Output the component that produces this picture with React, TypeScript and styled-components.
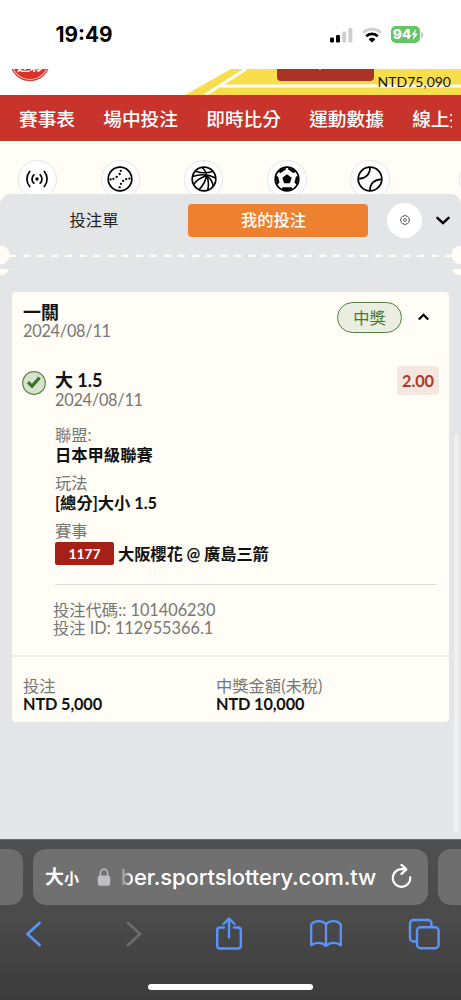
import React from 'react';
import styled, { createGlobalStyle } from 'styled-components';

const GlobalStyle = createGlobalStyle`
  * { box-sizing: border-box; }
  body { margin: 0; background: #fff; }
  svg { display: block; flex: none; }
`;

const Screen = styled.main`
  width: 461px;
  height: 1000px;
  overflow: hidden;
  display: flex;
  flex-direction: column;
  background: #fffdf5;
  font-family: Lato, 'Noto Sans CJK TC', sans-serif;
  color: #111;
`;

const StatusBar = styled.header`
  height: 69px;
  flex: none;
  display: flex;
  align-items: center;
  padding: 0 38px 0 55.5px;
  background: #fff;
`;
const Clock = styled.time`
  flex: 1;
  font: 700 20.8px/24px Inter, sans-serif;
  color: #000;
`;
const StatusIcons = styled.div`
  display: flex;
  align-items: center;
  gap: 9px;
`;
const Battery = styled.div`
  display: flex;
  align-items: center;
  gap: 1px;
`;
const BatteryLevel = styled.div`
  width: 29px;
  height: 17px;
  display: flex;
  align-items: center;
  justify-content: center;
  border-radius: 5px;
  background: #65c466;
  color: #fff;
  font: 800 13.8px/17px Inter, sans-serif;
`;
const BatteryTip = styled.i`
  width: 2px;
  height: 6px;
  border-radius: 0 2px 2px 0;
  background: #c4c4c4;
`;

const Masthead = styled.div`
  height: 26px;
  flex: none;
  display: flex;
  position: relative;
  overflow: hidden;
  background: #fff;
`;
const MastheadArt = styled.svg`
  position: absolute;
  inset: 0;
`;
const Logo = styled.div`
  position: absolute;
  left: 10px;
  top: -28px;
  width: 40px;
  height: 40px;
  padding-top: 17px;
  border-radius: 50%;
  background: #d8322a;
  box-shadow: inset 0 0 0 1px #d8322a, inset 0 0 0 2px #f4c9c5;
  color: #fff;
  text-align: center;
  font: 700 13px/1 'Noto Sans CJK TC', sans-serif;
`;
const Balance = styled.span`
  position: relative;
  margin: 4px 10px 0 auto;
  font-size: 14px;
  line-height: 18px;
  color: #111;
`;

const Nav = styled.nav`
  height: 46px;
  flex: none;
  display: flex;
  align-items: center;
  padding: 0 9px 0 19px;
  background: #c8342b;
  white-space: nowrap;
`;
const NavClip = styled.div`
  display: flex;
  gap: 28.4px;
  overflow: hidden;
`;
const NavItem = styled.a`
  flex: none;
  font: 500 18.65px/28px 'Noto Sans CJK TC', sans-serif;
  color: #fff;
`;

const Sports = styled.div`
  height: 53px;
  flex: none;
  display: flex;
  gap: 43.7px;
  padding: 18.5px 0 0 17.5px;
  overflow: hidden;
`;
const SportButton = styled.div<{ $offset?: number }>`
  width: 39.5px;
  height: 39.5px;
  flex: none;
  margin-left: ${(p) => p.$offset ?? 0}px;
  display: flex;
  align-items: center;
  justify-content: center;
  border-radius: 50%;
  border: 1px solid #e6e6e6;
  background: #fff;
`;

const Sheet = styled.section`
  height: 645px;
  flex: none;
  position: relative;
  overflow: hidden;
  display: flex;
  flex-direction: column;
  border-radius: 10px 10px 0 0;
  background: #e4e5e7;
`;
const Tabs = styled.div`
  height: 52px;
  flex: none;
  display: flex;
  align-items: center;
  padding-right: 10px;
`;
const Tab = styled.div<{ $active?: boolean }>`
  width: ${(p) => (p.$active ? 180 : 188)}px;
  height: 33px;
  padding-right: ${(p) => (p.$active ? 9 : 0)}px;
  border-radius: 4px;
  text-align: center;
  font-size: 16.3px;
  line-height: 32px;
  font-weight: ${(p) => (p.$active ? 500 : 400)};
  background: ${(p) => (p.$active ? '#ee8130' : 'transparent')};
  color: ${(p) => (p.$active ? '#fff' : '#222')};
`;
const SettingsButton = styled.div`
  width: 35px;
  height: 35px;
  margin: 0 14px 0 19px;
  display: flex;
  align-items: center;
  justify-content: center;
  border-radius: 50%;
  background: #fff;
`;
const Perforation = styled.svg`
  height: 36px;
`;

const Card = styled.article`
  width: 437px;
  height: 430px;
  margin: 10px 0 0 12px;
  display: flex;
  flex-direction: column;
  border-radius: 4px;
  background: #fffdf5;
`;
const CardHead = styled.div`
  height: 76px;
  display: flex;
  align-items: flex-start;
  padding: 10px 19px 0 11px;
`;
const Column = styled.div<{ $width?: number; $gap?: number }>`
  display: flex;
  flex-direction: column;
  gap: ${(p) => p.$gap ?? 0}px;
  ${(p) => (p.$width ? `width: ${p.$width}px;` : 'flex: 1;')}
`;
const Title = styled.h2`
  margin: 0;
  font-size: 18px;
  line-height: 20px;
  height: 20px;
  font-weight: 700;
  color: #111;
`;
const Muted = styled.div<{ $tight?: boolean }>`
  font-size: 16.3px;
  line-height: 18px;
  height: 18px;
  letter-spacing: ${(p) => (p.$tight ? '-0.25px' : '0')};
  color: #777;
  white-space: nowrap;
`;
const Strong = styled.div`
  font-size: 16.3px;
  line-height: 20px;
  height: 20px;
  font-weight: 700;
  color: #111;
  white-space: nowrap;
`;
const Amount = styled(Strong)`
  line-height: 18px;
  height: 18px;
  letter-spacing: -0.14px;
`;
const WonPill = styled.div`
  width: 65px;
  height: 31px;
  margin: 0 15px 0 0;
  border: 1.4px solid #538243;
  border-radius: 16px;
  background: #e9eee0;
  color: #477936;
  text-align: center;
  font-size: 16.3px;
  line-height: 29px;
`;
const Selection = styled.div`
  display: flex;
  height: 48px;
  padding: 2px 10px 0 10px;
`;
const CheckWrap = styled.div`
  width: 33px;
  padding-top: 1px;
`;
const Odds = styled.div`
  width: 42px;
  height: 29px;
  margin-top: -4px;
  border-radius: 4px;
  background: #f4e7df;
  color: #ae382d;
  text-align: center;
  font-size: 16.3px;
  letter-spacing: -0.1px;
  line-height: 29px;
  font-weight: 700;
`;
const Details = styled.div`
  height: 169px;
  margin: 0 12px 0 43px;
  padding-top: 10px;
  border-bottom: 1px solid #dfdeda;
`;
const Field = styled.div`
  height: 48px;
  display: flex;
  flex-direction: column;
  gap: 1px;
`;
const Match = styled.div`
  height: 25px;
  margin-top: 1px;
  display: flex;
  align-items: center;
  gap: 4px;
`;
const MatchCode = styled.span`
  width: 59px;
  height: 23px;
  border-radius: 2px;
  background: #a62018;
  color: #fff;
  text-align: center;
  font-size: 13.8px;
  line-height: 23px;
  font-weight: 700;
`;
const MatchName = styled(Strong)`
  letter-spacing: -0.1px;
`;
const Codes = styled.div`
  height: 72px;
  padding: 16px 0 0 41px;
  border-bottom: 2px solid #efede6;
`;
const Totals = styled.div`
  display: flex;
  padding: 20px 11px 0;
`;
const ScrollThumb = styled.div`
  position: absolute;
  right: 3px;
  top: 240px;
  width: 4px;
  height: 399px;
  border-radius: 2px;
  background: #f0f0f0;
`;

const Browser = styled.footer`
  height: 161px;
  flex: none;
  display: flex;
  flex-direction: column;
  align-items: center;
  border-top: 1px solid #6a6a6b;
  background: linear-gradient(#505050 0, #4a4a4a 50%, #3c3b3b 100%);
`;
const AddressRow = styled.div`
  width: 461px;
  margin-top: 9px;
  display: flex;
  gap: 10px;
`;
const NeighbourTab = styled.div<{ $side: 'left' | 'right' }>`
  width: 23px;
  height: 56px;
  border-radius: ${(p) => (p.$side === 'left' ? '0 13px 13px 0' : '13px 0 0 13px')};
  background: #6e6e6e;
`;
const AddressBar = styled.div`
  width: 395px;
  height: 56px;
  display: flex;
  align-items: center;
  padding: 0 16px 0 12px;
  border-radius: 13px;
  background: #707070;
  color: #fff;
`;
const TextSize = styled.span`
  width: 51.5px;
  font: 700 19px/28px 'Noto Sans CJK TC', sans-serif;
  small { font-size: 15px; }
`;
const Url = styled.span`
  margin-left: 10px;
  flex: 1;
  font: 500 22px/28px Inter, sans-serif;
  letter-spacing: -0.12px;
  white-space: nowrap;
  span {
    background: linear-gradient(90deg, #8a8a8a, #fff 85%);
    background-clip: text;
    color: transparent;
  }
`;
const Toolbar = styled.div`
  width: 461px;
  height: 58px;
  display: grid;
  grid-template-columns: 67px 133px 58px 136px 59px;
  align-items: center;
  justify-items: center;
`;
const HomeIndicator = styled.div`
  width: 165px;
  height: 6px;
  margin-top: 21px;
  border-radius: 4px;
  background: #fff;
`;

const blue = '#5b93f8';

const ballProps = {
  width: 26,
  height: 26,
  viewBox: '0 0 26 26',
  fill: 'none',
  stroke: '#000',
  strokeWidth: 1.7,
} as const;

const LiveIcon = () => (
  <svg {...ballProps} strokeLinecap="round">
    <circle cx="13" cy="13" r="1.7" fill="#000" stroke="none" />
    <path d="M9.8 8.8a5.8 5.8 0 0 0 0 8.4M16.2 8.8a5.8 5.8 0 0 1 0 8.4M5.7 5.5a11.5 11.5 0 0 0 0 15M20.3 5.5a11.5 11.5 0 0 1 0 15" />
  </svg>
);
const seam = [
  [13.8, 4.8], [12.7, 8], [9.6, 11], [6.4, 12.8], [3.6, 13.4],
  [22.4, 12.6], [19.2, 13.2], [16.2, 15], [14, 17.8], [12.7, 21.4],
];
const BaseballIcon = () => (
  <svg {...ballProps}>
    <circle cx="13" cy="13" r="11.8" />
    <g fill="#000" stroke="none">
      {seam.map(([x, y]) => (
        <circle key={`${x}-${y}`} cx={x} cy={y} r="1.15" />
      ))}
    </g>
  </svg>
);
const BasketballIcon = () => (
  <svg {...ballProps} strokeWidth={1.6}>
    <circle cx="13" cy="13" r="11.8" strokeWidth="1.7" />
    <path d="M4.5 5.2C10 7 17 7.200 21.800 5.200M1.500 10.5C9 8 18 8.500 24.700 12M2.500 18.500C6 13.500 10 11.500 15 9.700M11 1.500C14 4 15.500 7 15.500 9.700C15 14 12 19.500 8 23.500M15.500 9.700C17.500 14 18 19 16.800 24M15.500 9.700C19 12 21.500 15.500 22.200 20" />
  </svg>
);
const SoccerIcon = () => (
  <svg {...ballProps}>
    <circle cx="13" cy="13" r="11.8" />
    <path d="M13 8.2l4.7 3.5-1.8 5.5h-5.8l-1.8-5.5z" fill="#000" stroke="none" />
    <path d="M6 3.500L11.500 1.800l.6 1.500L6.800 6.900 4.600 6.200zM20 3.500L14.500 1.800l-.6 1.500 5.300 3.600 2.200-.7zM1.400 10l2.700.4 1.400 6-2.500 2.500zM24.600 10l-2.700.4-1.400 6 2.500 2.500zM8.500 21.200h9l1 2-3 1.600h-5l-3-1.600z" fill="#000" stroke="none" />
  </svg>
);
const TennisIcon = () => (
  <svg {...ballProps}>
    <circle cx="13" cy="13" r="11.8" />
    <path d="M13 1.3C13.2 8.5 8 13 1.3 12.7M24.7 13.3C18 13 12.8 17.5 13 24.7" />
  </svg>
);

const SignalIcon = () => (
  <svg width="24" height="16" viewBox="0 0 24 16">
    <rect x="1" y="10.5" width="4" height="5" rx="1.2" />
    <rect x="7" y="8" width="4" height="7.5" rx="1.2" />
    <rect x="13.2" y="4.5" width="4" height="11" rx="1.2" fill="#cfcfcf" />
    <rect x="19.4" y="1" width="4" height="14.5" rx="1.2" fill="#cfcfcf" />
  </svg>
);
const WifiIcon = () => (
  <svg width="20" height="16" viewBox="0 0 20 16" fill="none" strokeWidth="2.7">
    <path d="M1 5.9C6 .9 14 .9 19 5.9" stroke="#cfcfcf" />
    <path d="M4.2 9.2c3.2-3.2 8.4-3.2 11.6 0" stroke="#000" />
    <path d="M6.600 12.200q3.400-2.800 6.800 0L10 15.600z" fill="#000" />
  </svg>
);

const Dashes = () => (
  <Perforation width="461" height="36" viewBox="0 0 461 36">
    <g fill="#fffdf5">
      <circle cx="0" cy="9" r="9.6" />
      <circle cx="461" cy="9" r="9.6" />
      <path d="M0 23h9a9 9 0 0 1-9 6.5zM461 23h-9a9 9 0 0 0 9 6.5z" />
    </g>
    <path d="M9 9.900H452" stroke="#fffdf5" strokeWidth="2.4" strokeDasharray="7.2 6.88" />
  </Perforation>
);

const sports = [LiveIcon, BaseballIcon, BasketballIcon, SoccerIcon, TennisIcon];

export default function App() {
  return (
    <Screen>
      <GlobalStyle />
      <StatusBar>
        <Clock>19:49</Clock>
        <StatusIcons>
          <SignalIcon />
          <WifiIcon />
          <Battery>
            <BatteryLevel>
              94
              <svg width="7" height="11" viewBox="0 0 7 11" fill="#fff">
                <path d="M5 0L.3 6h2.6L1.8 11 6.8 4.7H4z" />
              </svg>
            </BatteryLevel>
            <BatteryTip />
          </Battery>
        </StatusIcons>
      </StatusBar>

      <Masthead>
        <MastheadArt width="461" height="26" viewBox="0 0 461 26">
          <path d="M231 0H461V26H185z" fill="#f9de4b" />
          <path d="M246 0L205 26M221 17H461" stroke="#fff" strokeWidth="3" fill="none" />
          <path d="M277 -6h97v14a4 4 0 0 1-4 4h-89a4 4 0 0 1-4-4z" fill="#a93225" />
          <path d="M319 0h2" stroke="#fff" strokeWidth="1" />
        </MastheadArt>
        <Logo>運彩</Logo>
        <Balance>NTD75,090</Balance>
      </Masthead>

      <Nav>
        <NavClip>
          {['賽事表', '場中投注', '即時比分', '運動數據', '線上投注'].map((label) => (
            <NavItem key={label}>{label}</NavItem>
          ))}
        </NavClip>
      </Nav>

      <Sports>
        {sports.map((Icon, i) => (
          <SportButton key={i}>
            <Icon />
          </SportButton>
        ))}
        <SportButton $offset={26} />
      </Sports>

      <Sheet>
        <Tabs>
          <Tab>投注單</Tab>
          <Tab $active>我的投注</Tab>
          <SettingsButton>
            <svg width="10" height="10" viewBox="0 0 20 20" fill="none" stroke="#555" strokeWidth="1.8">
              <path d="M8 1h4l.6 2.5 2.3-1.3 2.9 2.9-1.3 2.3L19 8v4l-2.5.6 1.3 2.3-2.9 2.9-2.3-1.3L12 19H8l-.6-2.5-2.3 1.3-2.9-2.9 1.3-2.3L1 12V8l2.5-.6-1.3-2.3 2.9-2.9 2.3 1.3z" />
              <circle cx="10" cy="10" r="3" />
            </svg>
          </SettingsButton>
          <svg width="14" height="9" viewBox="0 0 14 9" fill="none" stroke="#000" strokeWidth="2.4" strokeLinecap="round">
            <path d="M1.4 1.8L7 7.2l5.6-5.4" />
          </svg>
        </Tabs>
        <Dashes />

        <Card>
          <CardHead>
            <Column>
              <Title>一關</Title>
              <Muted $tight>2024/08/11</Muted>
            </Column>
            <WonPill>中獎</WonPill>
            <svg width="13" height="31" viewBox="0 0 13 31" fill="none" stroke="#000" strokeWidth="2.2">
              <path d="M1.8 17.600l4.7-4.8 4.7 4.8" />
            </svg>
          </CardHead>

          <Selection>
            <CheckWrap>
              <svg width="24" height="24" viewBox="0 0 24 24" fill="none">
                <circle cx="12" cy="12" r="11.3" fill="#d9e2cf" stroke="#5b8a49" strokeWidth="1.2" />
                <path d="M6 11.200l4 3.9 7.6-8.500" stroke="#397427" strokeWidth="3.200" />
              </svg>
            </CheckWrap>
            <Column $gap={1}>
              <Title>大 1.5</Title>
              <Muted $tight>2024/08/11</Muted>
            </Column>
            <Odds>2.00</Odds>
          </Selection>

          <Details>
            <Field>
              <Muted>聯盟:</Muted>
              <Strong>日本甲級聯賽</Strong>
            </Field>
            <Field>
              <Muted>玩法</Muted>
              <Strong>[總分]大小 1.5</Strong>
            </Field>
            <Muted>賽事</Muted>
            <Match>
              <MatchCode>1177</MatchCode>
              <MatchName>大阪櫻花 @ 廣島三箭</MatchName>
            </Match>
          </Details>

          <Codes>
            <Muted>投注代碼:: 101406230</Muted>
            <Muted>投注 ID: 112955366.1</Muted>
          </Codes>

          <Totals>
            <Column $width={193}>
              <Muted>投注</Muted>
              <Amount>NTD 5,000</Amount>
            </Column>
            <Column>
              <Muted>中獎金額(未稅)</Muted>
              <Amount>NTD 10,000</Amount>
            </Column>
          </Totals>
        </Card>
        <ScrollThumb />
      </Sheet>

      <Browser>
        <AddressRow>
          <NeighbourTab $side="left" />
          <AddressBar>
            <TextSize>
              大<small>小</small>
            </TextSize>
            <svg width="14" height="18" viewBox="0 0 14 18" fill="none">
              <rect x="0.8" y="7.5" width="12.4" height="10.2" rx="2" fill="#bdbdc2" />
              <path d="M3.4 8V4.8a3.6 3.6 0 0 1 7.2 0V8" stroke="#bdbdc2" strokeWidth="1.5" />
            </svg>
            <Url>
              <span>b</span>er.sportslottery.com.tw
            </Url>
            <svg width="21" height="26" viewBox="0 0 21 26" fill="none" stroke="#fff" strokeWidth="2.2" strokeLinecap="round" strokeLinejoin="round">
              <path d="M13.500 5.200H10.500A8.800 8.800 0 1 0 19.300 13.300" />
              <path d="M10.500 .9l4.800 4.500-4.800 4.500" />
            </svg>
          </AddressBar>
          <NeighbourTab $side="right" />
        </AddressRow>
        <Toolbar>
          <svg width="20" height="28" viewBox="0 0 20 28" fill="none" stroke={blue} strokeWidth="2.8" strokeLinecap="round" strokeLinejoin="round">
            <path d="M15.500 3L3.500 14l12 11" />
          </svg>
          <svg width="20" height="28" viewBox="0 0 20 28" fill="none" stroke="#6b6b6b" strokeWidth="2.8" strokeLinecap="round" strokeLinejoin="round">
            <path d="M4 3l12 11-12 11" />
          </svg>
          <svg width="28" height="34" viewBox="0 0 28 34" fill="none" stroke={blue} strokeWidth="2.4" strokeLinecap="round" strokeLinejoin="round">
            <path d="M9 10.500H5a2.800 2.800 0 0 0-2.800 2.800v15.400a2.800 2.800 0 0 0 2.800 2.800h18a2.800 2.800 0 0 0 2.800-2.800V13.300a2.800 2.800 0 0 0-2.800-2.800H19M14 20.500V2M8.500 7L14 1.500 19.500 7" />
          </svg>
          <svg width="34" height="30" viewBox="0 0 34 30" fill="none" stroke={blue} strokeWidth="2.3" strokeLinecap="round" strokeLinejoin="round">
            <path d="M17 5.500C14 1.200 5.500 .8 2.200 5.500V26.300c4-3.300 11-3.300 14.800.7 3.800-4 10.800-4 14.800-.7V5.500C28.500 .8 20 1.200 17 5.500zM17 5.500V27" />
          </svg>
          <svg width="32" height="32" viewBox="0 0 32 32" fill="none" stroke={blue} strokeWidth="2.4" strokeLinejoin="round">
            <rect x="9" y="9.300" width="21.600" height="21" rx="3.500" />
            <path d="M9 23.500H5.500A3.500 3.500 0 0 1 2 20V5.500A3.500 3.500 0 0 1 5.500 2H20a3.500 3.500 0 0 1 3.500 3.500V9" />
          </svg>
        </Toolbar>
        <HomeIndicator />
      </Browser>
    </Screen>
  );
}
